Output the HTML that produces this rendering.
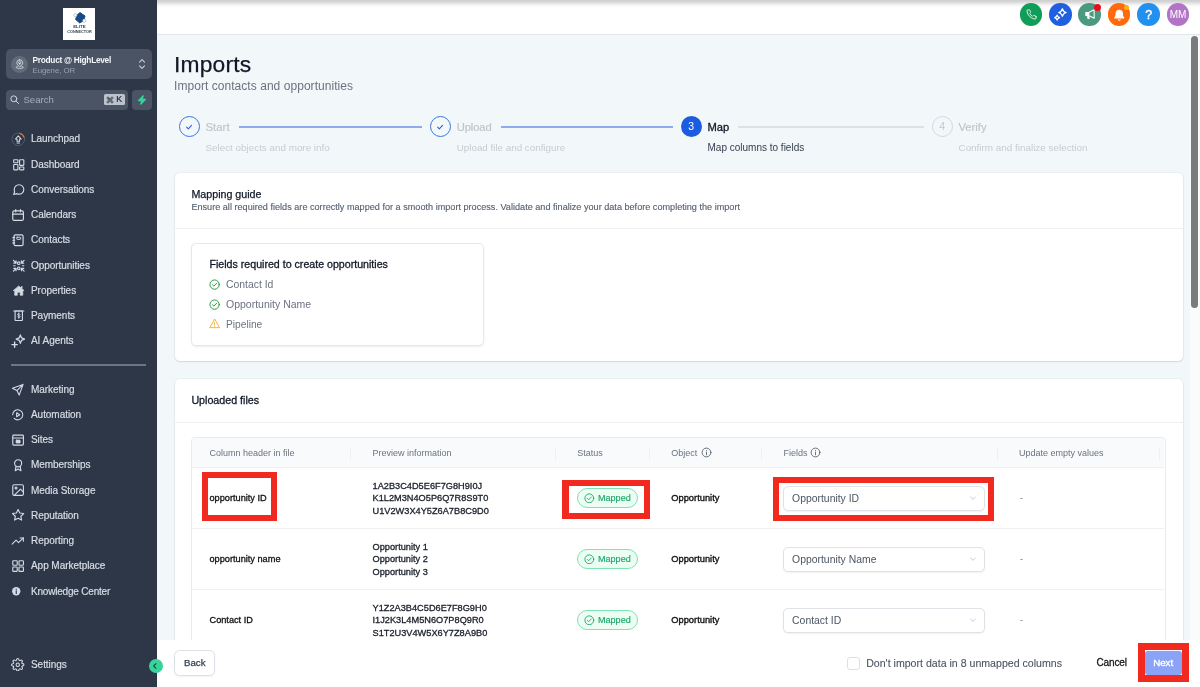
<!DOCTYPE html>
<html>
<head>
<meta charset="utf-8">
<title>Imports</title>
<style>
*{box-sizing:border-box;margin:0;padding:0}
html,body{width:1200px;height:687px;overflow:hidden;background:#f2f7fa;font-family:"Liberation Sans",sans-serif;}
.abs{position:absolute}
.t{position:absolute;white-space:nowrap}
#side{position:absolute;left:0;top:0;width:157px;height:687px;background:#2d3748;}
#top{position:absolute;left:157px;top:0;width:1043px;height:35px;background:#fff;border-bottom:1px solid #e4e7ea;}
#topshade{position:absolute;left:157px;top:0;width:1043px;height:8px;background:linear-gradient(#cecece,#d6d6d6 22%,#ededed 50%,#fbfbfb 80%,#fff);}
.card{position:absolute;background:#fff;border-radius:5px;box-shadow:0 1px 2px rgba(16,24,40,.10),0 0 0 1px rgba(16,24,40,.035)}
</style>
</head>
<body>
<div id="wrap" style="position:absolute;left:0;top:0;width:1200px;height:687px;will-change:transform;">
<div id="side">
<div class="abs" style="left:63.20px;top:7.80px;width:32.20px;height:32.00px;background:#fff;"></div>
<svg class="abs" style="left:63px;top:8px" width="33" height="32" viewBox="0 0 33 32">
<path d="M17 4.600 L22 8 L20.600 12.800 L16.600 14.900 L12.600 11.400 L14 7 Z" fill="#154a86" stroke="#154a86" stroke-width="1" stroke-linejoin="round"/>
<circle cx="12.400" cy="7.100" r="1.600" fill="#fff" stroke="#a9b1bd" stroke-width=".7"/>
<circle cx="21.300" cy="12.700" r="1.600" fill="#fff" stroke="#a9b1bd" stroke-width=".7"/>
<g font-family="Liberation Sans, sans-serif" font-weight="700" fill="#364257"><text x="16.400" y="20.300" font-size="3.800" text-anchor="middle" textLength="12.400" lengthAdjust="spacingAndGlyphs">ELITE</text><text x="16.500" y="24.800" font-size="3.800" text-anchor="middle" textLength="24.400" lengthAdjust="spacingAndGlyphs">CONNECTOR</text></g>
</svg>
<div class="abs" style="left:6.00px;top:49.00px;width:146.00px;height:30.00px;background:#4a5465;border-radius:5px;"></div>
<div class="abs" style="left:11.00px;top:55.50px;width:17.00px;height:17.00px;background:#626b7a;border-radius:50%;"></div>
<svg class="abs" style="left:14.75px;top:59.25px;" width="9.5" height="9.5" viewBox="0 0 24 24" fill="none" stroke="#eef1f4" stroke-width="1.8" stroke-linecap="round" stroke-linejoin="round"><path d="M12 12.5a3 3 0 1 0 0-6 3 3 0 0 0 0 6z"/><path d="M12 2a7.5 7.5 0 0 0-7.5 7.5c0 4 3.2 6.6 7.5 10.5 4.300-3.900 7.500-6.500 7.500-10.500A7.500 7.500 0 0 0 12 2z"/><path d="M7 18.500c-2.400.600-4 1.500-4 2.600C3 22.700 7 23.800 12 23.800s9-1.100 9-2.700c0-1.100-1.600-2-4-2.600"/></svg>
<div class="t" style="left:32.60px;top:55.77px;font-size:8.3px;line-height:8.3px;color:#f4f6f9;font-weight:700;letter-spacing:-0.28px;">Product @ HighLevel</div>
<div class="t" style="left:32.60px;top:66.61px;font-size:7.9px;line-height:7.9px;color:#97a0ae;letter-spacing:-0.1px;">Eugene, OR</div>
<svg class="abs" style="left:135.60px;top:57.90px;" width="12" height="12" viewBox="0 0 24 24" fill="none" stroke="#cbd0d8" stroke-width="2.1" stroke-linecap="round" stroke-linejoin="round"><path d="M7 8.200l5-5 5 5"/><path d="M7 15.800l5 5 5-5"/></svg>
<div class="abs" style="left:5.50px;top:90.00px;width:122.50px;height:20.00px;background:#4a5465;border-radius:4px;"></div>
<svg class="abs" style="left:8.90px;top:94.40px;" width="11" height="11" viewBox="0 0 24 24" fill="none" stroke="#d2d7de" stroke-width="2.1" stroke-linecap="round" stroke-linejoin="round"><circle cx="10.500" cy="10.500" r="6.500"/><path d="M21 21l-5.600-5.600"/></svg>
<div class="t" style="left:23.40px;top:94.77px;font-size:9.6px;line-height:9.6px;color:#a5adba;">Search</div>
<div class="abs" style="left:103.80px;top:94.00px;width:20.90px;height:11.20px;background:#bcc2cb;border-radius:1.5px;"></div>
<svg class="abs" style="left:106px;top:95.6px" width="8" height="8" viewBox="0 0 24 24" fill="none" stroke="#1f2937" stroke-width="2" stroke-linecap="round" stroke-linejoin="round"><path d="M9 9V6a3 3 0 1 0-3 3h12a3 3 0 1 0-3-3v12a3 3 0 1 0 3-3H6a3 3 0 1 0 3 3V9z"/></svg>
<div class="t" style="left:116.20px;top:95.35px;font-size:8.8px;line-height:8.8px;color:#1f2937;-webkit-text-stroke:0.2px #1f2937;">K</div>
<div class="abs" style="left:132.00px;top:90.00px;width:20.00px;height:20.00px;background:#4a5465;border-radius:4px;"></div>
<svg class="abs" style="left:137px;top:95px" width="10" height="10" viewBox="0 0 20 20"><path d="M12.500 1.500 L3 11.500 H9.300 L7.500 18.500 L17 8.500 H10.700 Z" fill="#37d39a" stroke="#37d39a" stroke-width="2.200" stroke-linejoin="round"/></svg>
<svg class="abs" style="left:11.10px;top:131.70px;" width="14.6" height="14.6" viewBox="0 0 24 24" fill="none" stroke="#d5dbe4" stroke-width="2" stroke-linecap="round" stroke-linejoin="round"><circle cx="12" cy="12" r="10.400" stroke="#566275" stroke-width="1.400"/><path d="M14.500 2.200a10 10 0 0 1 7 6.300" stroke="#e0793a" stroke-width="2"/><path d="M12 6.500l-4.800 5h2.700v3.600h4.200v-3.600h2.700z" stroke-width="1.700"/><path d="M9.900 18h4.200" stroke-width="1.700"/></svg>
<div class="t" style="left:31.00px;top:134.44px;font-size:10px;line-height:10px;color:#d8dde5;-webkit-text-stroke:0.2px #d8dde5;letter-spacing:-0.05px;">Launchpad</div>
<svg class="abs" style="left:11.65px;top:157.50px;" width="13.5" height="13.5" viewBox="0 0 24 24" fill="none" stroke="#d5dbe4" stroke-width="2" stroke-linecap="round" stroke-linejoin="round"><rect x="3" y="3" width="7.500" height="5.500" rx="1"/><rect x="13.500" y="3" width="7.500" height="10" rx="1"/><rect x="3" y="11.500" width="7.500" height="9.500" rx="1"/><rect x="13.500" y="16" width="7.500" height="5" rx="1"/></svg>
<div class="t" style="left:31.00px;top:159.69px;font-size:10px;line-height:10px;color:#d8dde5;-webkit-text-stroke:0.2px #d8dde5;letter-spacing:-0.05px;">Dashboard</div>
<svg class="abs" style="left:11.65px;top:182.75px;" width="13.5" height="13.5" viewBox="0 0 24 24" fill="none" stroke="#d5dbe4" stroke-width="2" stroke-linecap="round" stroke-linejoin="round"><path d="M21 11.500a8.400 8.400 0 0 1-8.500 8.300 8.700 8.700 0 0 1-3.800-.900L3 20.500l1.700-4.900A8.200 8.200 0 0 1 4 11.500a8.400 8.400 0 0 1 8.500-8.300A8.400 8.400 0 0 1 21 11.500z"/></svg>
<div class="t" style="left:31.00px;top:184.94px;font-size:10px;line-height:10px;color:#d8dde5;-webkit-text-stroke:0.2px #d8dde5;letter-spacing:-0.05px;">Conversations</div>
<svg class="abs" style="left:11.30px;top:207.65px;" width="14.2" height="14.2" viewBox="0 0 24 24" fill="none" stroke="#d5dbe4" stroke-width="2" stroke-linecap="round" stroke-linejoin="round"><rect x="3" y="5" width="18" height="16" rx="2.500"/><path d="M3 10.500h18M8 2.500v4M16 2.500v4"/></svg>
<div class="t" style="left:31.00px;top:210.19px;font-size:10px;line-height:10px;color:#d8dde5;-webkit-text-stroke:0.2px #d8dde5;letter-spacing:-0.05px;">Calendars</div>
<svg class="abs" style="left:11.15px;top:232.75px;" width="14.5" height="14.5" viewBox="0 0 24 24" fill="none" stroke="#d5dbe4" stroke-width="2" stroke-linecap="round" stroke-linejoin="round"><rect x="5" y="3" width="15" height="18" rx="2.500"/><path d="M3 7.500h3M3 12h3M3 16.500h3"/><rect x="9.500" y="7" width="6.500" height="3.500" rx=".8" stroke-width="1.600"/></svg>
<div class="t" style="left:31.00px;top:235.44px;font-size:10px;line-height:10px;color:#d8dde5;-webkit-text-stroke:0.2px #d8dde5;letter-spacing:-0.05px;">Contacts</div>
<svg class="abs" style="left:11.65px;top:258.50px;" width="13.5" height="13.5" viewBox="0 0 24 24" fill="none" stroke="#d5dbe4" stroke-width="2" stroke-linecap="round" stroke-linejoin="round"><circle cx="12" cy="7.500" r="2.300"/><circle cx="12" cy="16.500" r="2.300"/><path d="M2.500 2.500l4.500 4.500M7.200 3.200v4H3.200M21.500 2.500l-4.500 4.500M16.800 3.200v4h4M2.500 21.500l4.500-4.500M7.200 20.800v-4H3.200M21.500 21.500l-4.500-4.500M16.800 20.800v-4h4" stroke-width="2.100"/><path d="M3 12h2.500M18.500 12H21" stroke-width="2.100"/></svg>
<div class="t" style="left:31.00px;top:260.69px;font-size:10px;line-height:10px;color:#d8dde5;-webkit-text-stroke:0.2px #d8dde5;letter-spacing:-0.05px;">Opportunities</div>
<svg class="abs" style="left:11.65px;top:283.75px;" width="13.5" height="13.5" viewBox="0 0 24 24" fill="none" stroke="#d5dbe4" stroke-width="2" stroke-linecap="round" stroke-linejoin="round"><path d="M2.500 11.500L12 3.500l9.500 8h-2.300V20h-4.600v-5.500H9.400V20H4.800v-8.500z" fill="#d5dbe4" stroke-width="1.200"/><rect x="16" y="4" width="2.600" height="4" fill="#d5dbe4" stroke="none"/></svg>
<div class="t" style="left:31.00px;top:285.94px;font-size:10px;line-height:10px;color:#d8dde5;-webkit-text-stroke:0.2px #d8dde5;letter-spacing:-0.05px;">Properties</div>
<svg class="abs" style="left:11.65px;top:309.00px;" width="13.5" height="13.5" viewBox="0 0 24 24" fill="none" stroke="#d5dbe4" stroke-width="2" stroke-linecap="round" stroke-linejoin="round"><rect x="5.500" y="3.500" width="13" height="17" rx="1"/><path d="M3 3.500h18"/><path d="M14.200 9.500c-.5-.8-1.300-1.100-2.200-1.100-1.200 0-2 .7-2 1.600 0 2.300 4.400 1.100 4.400 3.400 0 1-.9 1.700-2.200 1.700-1 0-1.900-.4-2.400-1.200M12 7v9.600" stroke-width="1.600"/></svg>
<div class="t" style="left:31.00px;top:311.19px;font-size:10px;line-height:10px;color:#d8dde5;-webkit-text-stroke:0.2px #d8dde5;letter-spacing:-0.05px;">Payments</div>
<svg class="abs" style="left:11.15px;top:333.75px;" width="14.5" height="14.5" viewBox="0 0 24 24" fill="none" stroke="#d5dbe4" stroke-width="2" stroke-linecap="round" stroke-linejoin="round"><path d="M15.500 1.500l2 5 5 2-5 2-2 5-2-5-5-2 5-2z"/><path d="M6 13v9M1.500 17.500h9" stroke-width="2.300"/></svg>
<div class="t" style="left:31.00px;top:336.44px;font-size:10px;line-height:10px;color:#d8dde5;-webkit-text-stroke:0.2px #d8dde5;letter-spacing:-0.05px;">AI Agents</div>
<div class="abs" style="left:10.80px;top:364.00px;width:134.90px;height:1.50px;background:#6b7687;"></div>
<svg class="abs" style="left:11.25px;top:382.55px;" width="13.5" height="13.5" viewBox="0 0 24 24" fill="none" stroke="#d5dbe4" stroke-width="1.9" stroke-linecap="round" stroke-linejoin="round"><path d="M21.500 2.500L10.500 13.500M21.500 2.500l-7 19-4-8-8-4z"/></svg>
<div class="t" style="left:31.00px;top:384.64px;font-size:10px;line-height:10px;color:#d8dde5;-webkit-text-stroke:0.2px #d8dde5;letter-spacing:-0.05px;">Marketing</div>
<svg class="abs" style="left:11.25px;top:407.80px;" width="13.5" height="13.5" viewBox="0 0 24 24" fill="none" stroke="#d5dbe4" stroke-width="1.9" stroke-linecap="round" stroke-linejoin="round"><path d="M5.600 18.400A9 9 0 1 0 3 12"/><path d="M10 8.500l5.500 3.500-5.500 3.500z"/></svg>
<div class="t" style="left:31.00px;top:409.89px;font-size:10px;line-height:10px;color:#d8dde5;-webkit-text-stroke:0.2px #d8dde5;letter-spacing:-0.05px;">Automation</div>
<svg class="abs" style="left:10.90px;top:432.70px;" width="14.2" height="14.2" viewBox="0 0 24 24" fill="none" stroke="#d5dbe4" stroke-width="1.9" stroke-linecap="round" stroke-linejoin="round"><rect x="3" y="3.500" width="18" height="17" rx="1.500"/><path d="M3 8.500h18"/><rect x="8.500" y="12" width="7" height="5" rx="1" fill="#d5dbe4" stroke-width="1.200"/></svg>
<div class="t" style="left:31.00px;top:435.14px;font-size:10px;line-height:10px;color:#d8dde5;-webkit-text-stroke:0.2px #d8dde5;letter-spacing:-0.05px;">Sites</div>
<svg class="abs" style="left:10.90px;top:457.95px;" width="14.2" height="14.2" viewBox="0 0 24 24" fill="none" stroke="#d5dbe4" stroke-width="1.9" stroke-linecap="round" stroke-linejoin="round"><circle cx="12" cy="9" r="6"/><path d="M8.500 14l-1.300 7.500 4.800-2.800 4.800 2.800-1.300-7.500"/></svg>
<div class="t" style="left:31.00px;top:460.39px;font-size:10px;line-height:10px;color:#d8dde5;-webkit-text-stroke:0.2px #d8dde5;letter-spacing:-0.05px;">Memberships</div>
<svg class="abs" style="left:10.90px;top:483.20px;" width="14.2" height="14.2" viewBox="0 0 24 24" fill="none" stroke="#d5dbe4" stroke-width="1.9" stroke-linecap="round" stroke-linejoin="round"><rect x="3" y="3" width="18" height="18" rx="2.500"/><circle cx="8.500" cy="8.500" r="1.700"/><path d="M21 15.500l-5-5L5.500 21"/></svg>
<div class="t" style="left:31.00px;top:485.64px;font-size:10px;line-height:10px;color:#d8dde5;-webkit-text-stroke:0.2px #d8dde5;letter-spacing:-0.05px;">Media Storage</div>
<svg class="abs" style="left:10.90px;top:508.45px;" width="14.2" height="14.2" viewBox="0 0 24 24" fill="none" stroke="#d5dbe4" stroke-width="1.9" stroke-linecap="round" stroke-linejoin="round"><path d="M12 2.500l2.900 6 6.600.900-4.800 4.600 1.200 6.500-5.900-3.100-5.900 3.100 1.200-6.500L2.500 9.400l6.600-.900z"/></svg>
<div class="t" style="left:31.00px;top:510.88px;font-size:10px;line-height:10px;color:#d8dde5;-webkit-text-stroke:0.2px #d8dde5;letter-spacing:-0.05px;">Reputation</div>
<svg class="abs" style="left:11.25px;top:534.05px;" width="13.5" height="13.5" viewBox="0 0 24 24" fill="none" stroke="#d5dbe4" stroke-width="1.9" stroke-linecap="round" stroke-linejoin="round"><path d="M22 7l-8.500 8.500-4.500-4.500L2 18"/><path d="M16 7h6v6"/></svg>
<div class="t" style="left:31.00px;top:536.13px;font-size:10px;line-height:10px;color:#d8dde5;-webkit-text-stroke:0.2px #d8dde5;letter-spacing:-0.05px;">Reporting</div>
<svg class="abs" style="left:10.90px;top:558.95px;" width="14.2" height="14.2" viewBox="0 0 24 24" fill="none" stroke="#d5dbe4" stroke-width="1.9" stroke-linecap="round" stroke-linejoin="round"><rect x="3" y="3" width="7.500" height="7.500" rx="1.200"/><rect x="13.500" y="3" width="7.500" height="7.500" rx="1.200"/><rect x="3" y="13.500" width="7.500" height="7.500" rx="1.200"/><rect x="13.500" y="13.500" width="7.500" height="7.500" rx="1.200"/></svg>
<div class="t" style="left:31.00px;top:561.38px;font-size:10px;line-height:10px;color:#d8dde5;-webkit-text-stroke:0.2px #d8dde5;letter-spacing:-0.05px;">App Marketplace</div>
<svg class="abs" style="left:10.95px;top:586.05px;" width="10.5" height="10.5" viewBox="0 0 24 24" fill="none" stroke="#d5dbe4" stroke-width="1.9" stroke-linecap="round" stroke-linejoin="round"><circle cx="12" cy="12" r="9.500" fill="#d5dbe4" stroke="none"/><path d="M12 11v6" stroke="#2d3748" stroke-width="2.600"/><circle cx="12" cy="7.300" r="1.500" fill="#2d3748" stroke="none"/></svg>
<div class="t" style="left:31.00px;top:586.63px;font-size:10px;line-height:10px;color:#d8dde5;-webkit-text-stroke:0.2px #d8dde5;letter-spacing:-0.2px;">Knowledge Center</div>
<svg class="abs" style="left:11.05px;top:657.75px;" width="13.5" height="13.5" viewBox="0 0 24 24" fill="none" stroke="#d5dbe4" stroke-width="1.9" stroke-linecap="round" stroke-linejoin="round"><circle cx="12" cy="12" r="3"/><path d="M19.400 15a1.650 1.650 0 0 0 .33 1.820l.06.06a2 2 0 1 1-2.830 2.830l-.06-.06a1.650 1.650 0 0 0-1.820-.33 1.650 1.650 0 0 0-1 1.510V21a2 2 0 0 1-4 0v-.09A1.650 1.650 0 0 0 9 19.400a1.650 1.650 0 0 0-1.820.33l-.06.06a2 2 0 1 1-2.830-2.830l.06-.06a1.650 1.650 0 0 0 .33-1.820 1.650 1.650 0 0 0-1.510-1H3a2 2 0 0 1 0-4h.09A1.650 1.650 0 0 0 4.600 9a1.650 1.650 0 0 0-.33-1.820l-.06-.06a2 2 0 1 1 2.830-2.830l.06.06a1.650 1.650 0 0 0 1.820.33H9a1.650 1.650 0 0 0 1-1.510V3a2 2 0 0 1 4 0v.09a1.650 1.650 0 0 0 1 1.510 1.650 1.650 0 0 0 1.820-.33l.06-.06a2 2 0 1 1 2.830 2.830l-.06.06a1.650 1.650 0 0 0-.33 1.820V9a1.650 1.650 0 0 0 1.510 1H21a2 2 0 0 1 0 4h-.09a1.650 1.650 0 0 0-1.510 1z"/></svg>
<div class="t" style="left:31.00px;top:660.13px;font-size:10px;line-height:10px;color:#d8dde5;-webkit-text-stroke:0.2px #d8dde5;letter-spacing:-0.05px;">Settings</div>
</div>
<div id="top"></div><div id="topshade"></div>
<div class="abs" style="left:1019.75px;top:3.45px;width:22.5px;height:22.5px;border-radius:50%;background:#0f9d58"></div>
<svg class="abs" style="left:1025.50px;top:9.20px;" width="11" height="11" viewBox="0 0 24 24" fill="none" stroke="#e9fff3" stroke-width="1.9" stroke-linecap="round" stroke-linejoin="round"><path d="M22 16.920v3a2 2 0 0 1-2.180 2 19.790 19.790 0 0 1-8.630-3.070 19.500 19.500 0 0 1-6-6 19.790 19.790 0 0 1-3.070-8.670A2 2 0 0 1 4.110 2h3a2 2 0 0 1 2 1.720 12.840 12.840 0 0 0 .7 2.810 2 2 0 0 1-.45 2.110L8.090 9.910a16 16 0 0 0 6 6l1.270-1.270a2 2 0 0 1 2.110-.45 12.840 12.840 0 0 0 2.810.7A2 2 0 0 1 22 16.920z"/></svg>
<div class="abs" style="left:1049.05px;top:3.45px;width:22.5px;height:22.5px;border-radius:50%;background:#1f5fe0"></div>
<svg class="abs" style="left:1053.10px;top:7.20px;" width="15" height="15" viewBox="0 0 24 24" fill="none" stroke="#fff" stroke-width="2" stroke-linecap="round" stroke-linejoin="round"><path d="M15.00 2.80Q16.20 7.60 21.00 8.80Q16.20 10.00 15.00 14.80Q13.80 10.00 9.00 8.80Q13.80 7.60 15.00 2.80z"/><path d="M6.60 13.00Q7.40 16.20 10.60 17.00Q7.40 17.80 6.60 21.00Q5.80 17.80 2.60 17.00Q5.80 16.20 6.60 13.00z"/></svg>
<div class="abs" style="left:1078.45px;top:3.45px;width:22.5px;height:22.5px;border-radius:50%;background:#4a9a82"></div>
<svg class="abs" style="left:1083.95px;top:8.35px;" width="12.5" height="12.5" viewBox="0 0 24 24" fill="none" stroke="#fff" stroke-width="2" stroke-linecap="round" stroke-linejoin="round"><path d="M9 8.500L19.500 3.500v16L9 14.500z"/><path d="M3.500 8.500H9v6H3.500z" fill="#fff"/><path d="M6 14.500l1.200 6h3.300l-1.200-6z" fill="#fff" stroke-width="1.200"/></svg>
<div class="abs" style="left:1094.00px;top:3.50px;width:7.00px;height:7.00px;background:#ee0c1a;border-radius:50%;"></div>
<div class="abs" style="left:1107.95px;top:3.45px;width:22.5px;height:22.5px;border-radius:50%;background:#ff6a0c"></div>
<svg class="abs" style="left:1112.95px;top:8.55px;" width="12.5" height="12.5" viewBox="0 0 24 24" fill="none" stroke="#fff" stroke-width="2" stroke-linecap="round" stroke-linejoin="round"><path d="M18 8.500A6 6 0 0 0 6 8.500c0 7-3 8.500-3 8.500h18s-3-1.500-3-8.500z" fill="#fff"/><path d="M10.300 20.500a2 2 0 0 0 3.400 0" /></svg>
<div class="abs" style="left:1123.80px;top:5.00px;width:5.00px;height:5.00px;background:#f5b316;border-radius:50%;"></div>
<div class="abs" style="left:1137.45px;top:3.45px;width:22.5px;height:22.5px;border-radius:50%;background:#2190ee"></div>
<div class="t" style="left:1145.30px;top:8.79px;font-size:12.3px;line-height:12.3px;color:#fff;-webkit-text-stroke:0.45px #fff;">?</div>
<div class="abs" style="left:1166.75px;top:3.45px;width:22.5px;height:22.5px;border-radius:50%;background:#b274c6"></div>
<div class="t" style="left:1169.70px;top:10.04px;font-size:10px;line-height:10px;color:#fff;letter-spacing:-0.1px;">MM</div>
<div class="abs" style="left:1190.00px;top:36.00px;width:10.00px;height:604.00px;background:#fafbfb;"></div>
<div class="abs" style="left:1190.90px;top:36.00px;width:7.40px;height:272.00px;background:#7b7b7d;border-radius:4px;"></div>
<div class="t" style="left:174.00px;top:53.10px;font-size:22.8px;line-height:22.8px;color:#111827;-webkit-text-stroke:0.25px #111827;letter-spacing:0.2px;">Imports</div>
<div class="t" style="left:174.00px;top:80.14px;font-size:12px;line-height:12px;color:#6b7280;letter-spacing:0.05px;">Import contacts and opportunities</div>
<div class="abs" style="left:178.75px;top:115.75px;width:21.00px;height:21.00px;border:1.2px solid #3b73e0;border-radius:50%;"></div>
<svg class="abs" style="left:185.25px;top:122.55px;" width="8" height="8" viewBox="0 0 24 24" fill="none" stroke="#2f62d8" stroke-width="3.2" stroke-linecap="round" stroke-linejoin="round"><path d="M5 12.500l5 5L19.500 7"/></svg>
<div class="abs" style="left:429.75px;top:115.75px;width:21.00px;height:21.00px;border:1.2px solid #3b73e0;border-radius:50%;"></div>
<svg class="abs" style="left:436.25px;top:122.55px;" width="8" height="8" viewBox="0 0 24 24" fill="none" stroke="#2f62d8" stroke-width="3.2" stroke-linecap="round" stroke-linejoin="round"><path d="M5 12.500l5 5L19.500 7"/></svg>
<div class="abs" style="left:680.50px;top:115.75px;width:21.00px;height:21.00px;background:#1c5ce0;border-radius:50%;"></div>
<div class="t" style="left:688.20px;top:121.21px;font-size:10.5px;line-height:10.5px;color:#fff;">3</div>
<div class="abs" style="left:931.75px;top:115.75px;width:21.00px;height:21.00px;border:1px solid #d3d7dc;border-radius:50%;"></div>
<div class="t" style="left:939.20px;top:121.21px;font-size:10.5px;line-height:10.5px;color:#c3c7cd;">4</div>
<div class="abs" style="left:239.00px;top:126.05px;width:182.60px;height:1.80px;background:#8cacec;"></div>
<div class="abs" style="left:500.50px;top:126.05px;width:172.00px;height:1.80px;background:#8cacec;"></div>
<div class="abs" style="left:738.00px;top:126.05px;width:185.75px;height:1.80px;background:#dde0e5;"></div>
<div class="t" style="left:205.50px;top:121.55px;font-size:11.4px;line-height:11.4px;color:#c1c5cb;-webkit-text-stroke:0.2px #c1c5cb;">Start</div>
<div class="t" style="left:456.75px;top:121.72px;font-size:11.2px;line-height:11.2px;color:#c1c5cb;-webkit-text-stroke:0.2px #c1c5cb;letter-spacing:-0.1px;">Upload</div>
<div class="t" style="left:707.50px;top:121.52px;font-size:11.2px;line-height:11.2px;color:#111827;-webkit-text-stroke:0.3px #111827;">Map</div>
<div class="t" style="left:958.50px;top:121.72px;font-size:11.2px;line-height:11.2px;color:#c1c5cb;-webkit-text-stroke:0.2px #c1c5cb;">Verify</div>
<div class="t" style="left:205.50px;top:142.66px;font-size:9.85px;line-height:9.85px;color:#c8ccd2;">Select objects and more info</div>
<div class="t" style="left:456.75px;top:142.70px;font-size:9.8px;line-height:9.8px;color:#c8ccd2;">Upload file and configure</div>
<div class="t" style="left:707.50px;top:142.53px;font-size:10px;line-height:10px;color:#374151;">Map columns to fields</div>
<div class="t" style="left:958.50px;top:142.62px;font-size:9.9px;line-height:9.9px;color:#c8ccd2;">Confirm and finalize selection</div>
<div class="card" style="left:174.5px;top:173px;width:1008.6px;height:188px"></div>
<div class="abs" style="left:174.50px;top:227.50px;width:1009.00px;height:1.00px;background:#eef0f3;"></div>
<div class="t" style="left:191.40px;top:188.84px;font-size:10.7px;line-height:10.7px;color:#111827;-webkit-text-stroke:0.25px #111827;">Mapping guide</div>
<div class="t" style="left:191.40px;top:203.00px;font-size:9.1px;line-height:9.1px;color:#556070;-webkit-text-stroke:0.12px #556070;letter-spacing:0.01px;">Ensure all required fields are correctly mapped for a smooth import process. Validate and finalize your data before completing the import</div>
<div class="abs" style="left:191.40px;top:243.00px;width:292.30px;height:103.00px;background:#fff;border:1px solid #e6e8ec;border-radius:5px;box-shadow:0 1px 2px rgba(16,24,40,.08);"></div>
<div class="t" style="left:209.50px;top:259.30px;font-size:10.63px;line-height:10.63px;color:#111827;-webkit-text-stroke:0.3px #111827;">Fields required to create opportunities</div>
<svg class="abs" style="left:208.90px;top:279.20px;" width="11.2" height="11.2" viewBox="0 0 24 24" fill="none" stroke="#2a9a3f" stroke-width="2.1" stroke-linecap="round" stroke-linejoin="round"><circle cx="12" cy="12" r="10"/><path d="M7.500 12.300l3 3 6-6.300"/></svg>
<div class="t" style="left:226.00px;top:280.00px;font-size:10.4px;line-height:10.4px;color:#6b7280;">Contact Id</div>
<svg class="abs" style="left:208.90px;top:298.80px;" width="11.2" height="11.2" viewBox="0 0 24 24" fill="none" stroke="#2a9a3f" stroke-width="2.1" stroke-linecap="round" stroke-linejoin="round"><circle cx="12" cy="12" r="10"/><path d="M7.500 12.300l3 3 6-6.300"/></svg>
<div class="t" style="left:226.00px;top:298.71px;font-size:10.5px;line-height:10.5px;color:#6b7280;">Opportunity Name</div>
<svg class="abs" style="left:208.90px;top:317.80px;" width="11" height="11" viewBox="0 0 24 24" fill="none" stroke="#f0a92c" stroke-width="1.9" stroke-linecap="round" stroke-linejoin="round"><path d="M12 3L1.800 21h20.400z"/><path d="M12 10v5M12 18v.3"/></svg>
<div class="t" style="left:226.00px;top:319.57px;font-size:10.2px;line-height:10.2px;color:#6b7280;">Pipeline</div>
<div class="card" style="left:174.5px;top:378.5px;width:1008.6px;height:300px"></div>
<div class="abs" style="left:174.50px;top:421.70px;width:1009.00px;height:1.00px;background:#eef0f3;"></div>
<div class="t" style="left:191.40px;top:395.34px;font-size:10.7px;line-height:10.7px;color:#111827;-webkit-text-stroke:0.3px #111827;">Uploaded files</div>
<div class="abs" style="left:191.40px;top:436.80px;width:974.40px;height:223.20px;background:#fff;border:1px solid #e9ebef;border-radius:4px;"></div>
<div class="abs" style="left:192.40px;top:437.80px;width:971.70px;height:29.50px;background:#f9fafb;border-radius:3px 3px 0 0;"></div>
<div class="abs" style="left:192.40px;top:467.00px;width:971.70px;height:1.00px;background:#eef0f3;"></div>
<div class="abs" style="left:350.20px;top:448.00px;width:1.00px;height:12.00px;background:#eef0f3;"></div>
<div class="abs" style="left:554.60px;top:448.00px;width:1.00px;height:12.00px;background:#eef0f3;"></div>
<div class="abs" style="left:648.70px;top:448.00px;width:1.00px;height:12.00px;background:#eef0f3;"></div>
<div class="abs" style="left:761.30px;top:448.00px;width:1.00px;height:12.00px;background:#eef0f3;"></div>
<div class="abs" style="left:996.90px;top:448.00px;width:1.00px;height:12.00px;background:#eef0f3;"></div>
<div class="abs" style="left:1159.40px;top:448.00px;width:1.00px;height:12.00px;background:#eef0f3;"></div>
<div class="t" style="left:209.50px;top:448.58px;font-size:9px;line-height:9px;color:#6b7280;">Column header in file</div>
<div class="t" style="left:372.50px;top:448.58px;font-size:9px;line-height:9px;color:#6b7280;">Preview information</div>
<div class="t" style="left:577.30px;top:448.58px;font-size:9px;line-height:9px;color:#6b7280;">Status</div>
<div class="t" style="left:671.30px;top:448.58px;font-size:9px;line-height:9px;color:#6b7280;">Object</div>
<div class="t" style="left:783.40px;top:448.58px;font-size:9px;line-height:9px;color:#6b7280;">Fields</div>
<div class="t" style="left:1019.00px;top:448.58px;font-size:9px;line-height:9px;color:#6b7280;">Update empty values</div>
<svg class="abs" style="left:700.50px;top:447.10px;" width="11" height="11" viewBox="0 0 24 24" fill="none" stroke="#4b5563" stroke-width="1.8" stroke-linecap="round" stroke-linejoin="round"><circle cx="12" cy="12" r="9.600"/><path d="M12 11v6M12 7.300v.3"/></svg>
<svg class="abs" style="left:810.30px;top:447.10px;" width="11" height="11" viewBox="0 0 24 24" fill="none" stroke="#4b5563" stroke-width="1.8" stroke-linecap="round" stroke-linejoin="round"><circle cx="12" cy="12" r="9.600"/><path d="M12 11v6M12 7.300v.3"/></svg>
<div class="abs" style="left:201.60px;top:472.00px;width:75.60px;height:48.90px;background:#f2291e;"></div>
<div class="abs" style="left:208.00px;top:478.20px;width:63.30px;height:36.80px;background:#fff;"></div>
<div class="abs" style="left:562.40px;top:479.90px;width:87.60px;height:39.40px;background:#f2291e;"></div>
<div class="abs" style="left:569.10px;top:486.10px;width:74.70px;height:27.20px;background:#fff;"></div>
<div class="abs" style="left:772.90px;top:476.90px;width:221.40px;height:44.30px;background:#f2291e;"></div>
<div class="abs" style="left:779.20px;top:483.20px;width:208.80px;height:31.80px;background:#fff;"></div>
<div class="t" style="left:209.50px;top:494.01px;font-size:9.2px;line-height:9.2px;color:#111111;-webkit-text-stroke:0.3px #111111;">opportunity ID</div>
<div class="t" style="left:372.50px;top:481.51px;font-size:9.2px;line-height:9.2px;color:#1a1f2b;-webkit-text-stroke:0.3px #1a1f2b;letter-spacing:0.02px;">1A2B3C4D5E6F7G8H9I0J</div>
<div class="t" style="left:372.50px;top:494.16px;font-size:9.2px;line-height:9.2px;color:#1a1f2b;-webkit-text-stroke:0.3px #1a1f2b;letter-spacing:0.02px;">K1L2M3N4O5P6Q7R8S9T0</div>
<div class="t" style="left:372.50px;top:506.81px;font-size:9.2px;line-height:9.2px;color:#1a1f2b;-webkit-text-stroke:0.3px #1a1f2b;letter-spacing:0.02px;">U1V2W3X4Y5Z6A7B8C9D0</div>
<div class="abs" style="left:577.30px;top:488.00px;width:60.90px;height:20.00px;background:#ecfdf4;border:1px solid #7fe3b3;border-radius:10px;"></div>
<svg class="abs" style="left:584.20px;top:492.90px;" width="10.6" height="10.6" viewBox="0 0 24 24" fill="none" stroke="#17a566" stroke-width="2" stroke-linecap="round" stroke-linejoin="round"><circle cx="12" cy="12" r="10"/><path d="M7.500 12.300l3 3 6-6.300"/></svg>
<div class="t" style="left:597.90px;top:494.00px;font-size:9.1px;line-height:9.1px;color:#1aa868;-webkit-text-stroke:0.15px #1aa868;">Mapped</div>
<div class="t" style="left:671.30px;top:493.93px;font-size:9.3px;line-height:9.3px;color:#111111;-webkit-text-stroke:0.35px #111111;">Opportunity</div>
<div class="abs" style="left:783.40px;top:486.10px;width:201.20px;height:24.60px;background:#fff;border:1px solid #dfe2e7;border-radius:5px;box-shadow:0 1px 2px rgba(16,24,40,.06);"></div>
<div class="t" style="left:792.10px;top:493.80px;font-size:10.4px;line-height:10.4px;color:#4b5563;">Opportunity ID</div>
<svg class="abs" style="left:968.70px;top:494.30px;" width="8" height="8" viewBox="0 0 24 24" fill="none" stroke="#a6adb8" stroke-width="2" stroke-linecap="round" stroke-linejoin="round"><path d="M5 9l7 7 7-7"/></svg>
<div class="t" style="left:1020.00px;top:493.68px;font-size:9px;line-height:9px;color:#6b7280;">-</div>
<div class="abs" style="left:192.40px;top:528.30px;width:971.70px;height:1.00px;background:#eef0f3;"></div>
<div class="t" style="left:209.50px;top:555.01px;font-size:9.2px;line-height:9.2px;color:#111111;-webkit-text-stroke:0.3px #111111;">opportunity name</div>
<div class="t" style="left:372.50px;top:542.51px;font-size:9.2px;line-height:9.2px;color:#1a1f2b;-webkit-text-stroke:0.3px #1a1f2b;letter-spacing:0.02px;">Opportunity 1</div>
<div class="t" style="left:372.50px;top:555.16px;font-size:9.2px;line-height:9.2px;color:#1a1f2b;-webkit-text-stroke:0.3px #1a1f2b;letter-spacing:0.02px;">Opportunity 2</div>
<div class="t" style="left:372.50px;top:567.81px;font-size:9.2px;line-height:9.2px;color:#1a1f2b;-webkit-text-stroke:0.3px #1a1f2b;letter-spacing:0.02px;">Opportunity 3</div>
<div class="abs" style="left:577.30px;top:549.00px;width:60.90px;height:20.00px;background:#ecfdf4;border:1px solid #7fe3b3;border-radius:10px;"></div>
<svg class="abs" style="left:584.20px;top:553.90px;" width="10.6" height="10.6" viewBox="0 0 24 24" fill="none" stroke="#17a566" stroke-width="2" stroke-linecap="round" stroke-linejoin="round"><circle cx="12" cy="12" r="10"/><path d="M7.500 12.300l3 3 6-6.300"/></svg>
<div class="t" style="left:597.90px;top:555.00px;font-size:9.1px;line-height:9.1px;color:#1aa868;-webkit-text-stroke:0.15px #1aa868;">Mapped</div>
<div class="t" style="left:671.30px;top:554.93px;font-size:9.3px;line-height:9.3px;color:#111111;-webkit-text-stroke:0.35px #111111;">Opportunity</div>
<div class="abs" style="left:783.40px;top:547.10px;width:201.20px;height:24.60px;background:#fff;border:1px solid #dfe2e7;border-radius:5px;box-shadow:0 1px 2px rgba(16,24,40,.06);"></div>
<div class="t" style="left:792.10px;top:554.80px;font-size:10.4px;line-height:10.4px;color:#4b5563;">Opportunity Name</div>
<svg class="abs" style="left:968.70px;top:555.30px;" width="8" height="8" viewBox="0 0 24 24" fill="none" stroke="#a6adb8" stroke-width="2" stroke-linecap="round" stroke-linejoin="round"><path d="M5 9l7 7 7-7"/></svg>
<div class="t" style="left:1020.00px;top:554.68px;font-size:9px;line-height:9px;color:#6b7280;">-</div>
<div class="abs" style="left:192.40px;top:589.30px;width:971.70px;height:1.00px;background:#eef0f3;"></div>
<div class="t" style="left:209.50px;top:616.01px;font-size:9.2px;line-height:9.2px;color:#111111;-webkit-text-stroke:0.3px #111111;">Contact ID</div>
<div class="t" style="left:372.50px;top:603.51px;font-size:9.2px;line-height:9.2px;color:#1a1f2b;-webkit-text-stroke:0.3px #1a1f2b;letter-spacing:0.02px;">Y1Z2A3B4C5D6E7F8G9H0</div>
<div class="t" style="left:372.50px;top:616.16px;font-size:9.2px;line-height:9.2px;color:#1a1f2b;-webkit-text-stroke:0.3px #1a1f2b;letter-spacing:0.02px;">I1J2K3L4M5N6O7P8Q9R0</div>
<div class="t" style="left:372.50px;top:628.81px;font-size:9.2px;line-height:9.2px;color:#1a1f2b;-webkit-text-stroke:0.3px #1a1f2b;letter-spacing:0.02px;">S1T2U3V4W5X6Y7Z8A9B0</div>
<div class="abs" style="left:577.30px;top:610.00px;width:60.90px;height:20.00px;background:#ecfdf4;border:1px solid #7fe3b3;border-radius:10px;"></div>
<svg class="abs" style="left:584.20px;top:614.90px;" width="10.6" height="10.6" viewBox="0 0 24 24" fill="none" stroke="#17a566" stroke-width="2" stroke-linecap="round" stroke-linejoin="round"><circle cx="12" cy="12" r="10"/><path d="M7.500 12.300l3 3 6-6.300"/></svg>
<div class="t" style="left:597.90px;top:616.00px;font-size:9.1px;line-height:9.1px;color:#1aa868;-webkit-text-stroke:0.15px #1aa868;">Mapped</div>
<div class="t" style="left:671.30px;top:615.93px;font-size:9.3px;line-height:9.3px;color:#111111;-webkit-text-stroke:0.35px #111111;">Opportunity</div>
<div class="abs" style="left:783.40px;top:608.10px;width:201.20px;height:24.60px;background:#fff;border:1px solid #dfe2e7;border-radius:5px;box-shadow:0 1px 2px rgba(16,24,40,.06);"></div>
<div class="t" style="left:792.10px;top:615.80px;font-size:10.4px;line-height:10.4px;color:#4b5563;">Contact ID</div>
<svg class="abs" style="left:968.70px;top:616.30px;" width="8" height="8" viewBox="0 0 24 24" fill="none" stroke="#a6adb8" stroke-width="2" stroke-linecap="round" stroke-linejoin="round"><path d="M5 9l7 7 7-7"/></svg>
<div class="t" style="left:1020.00px;top:615.68px;font-size:9px;line-height:9px;color:#6b7280;">-</div>
<div class="abs" style="left:157.00px;top:639.60px;width:1043.00px;height:47.40px;background:#fff;"></div>
<div class="abs" style="left:174.20px;top:650.40px;width:41.30px;height:25.40px;background:#fff;border:1px solid #dcdfe5;border-radius:5.5px;box-shadow:0 1px 2px rgba(16,24,40,.05);"></div>
<div class="t" style="left:184.00px;top:658.39px;font-size:9.7px;line-height:9.7px;color:#344054;-webkit-text-stroke:0.25px #344054;">Back</div>
<div class="abs" style="left:847.30px;top:657.10px;width:12.60px;height:12.60px;background:#fff;border:1px solid #dde0e6;border-radius:3px;"></div>
<div class="t" style="left:866.20px;top:658.13px;font-size:10.6px;line-height:10.6px;color:#4b5563;-webkit-text-stroke:0.1px #4b5563;">Don't import data in 8 unmapped columns</div>
<div class="t" style="left:1096.40px;top:658.03px;font-size:10px;line-height:10px;color:#151515;-webkit-text-stroke:0.28px #151515;letter-spacing:-0.12px;">Cancel</div>
<div class="abs" style="left:1138.20px;top:643.40px;width:50.70px;height:38.40px;background:#f2291e;"></div>
<div class="abs" style="left:1144.60px;top:649.80px;width:37.90px;height:25.60px;background:#fff;"></div>
<div class="abs" style="left:1144.60px;top:650.70px;width:37.30px;height:24.70px;background:#8ba3f7;border-radius:3px;"></div>
<div class="t" style="left:1153.20px;top:657.79px;font-size:9.7px;line-height:9.7px;color:#fff;-webkit-text-stroke:0.35px #fff;">Next</div>
<div class="abs" style="left:148.50px;top:658.60px;width:14.50px;height:14.50px;background:#36d39a;border-radius:50%;"></div>
<svg class="abs" style="left:151.40px;top:661.90px;" width="8" height="8" viewBox="0 0 24 24" fill="none" stroke="#17503f" stroke-width="3.2" stroke-linecap="round" stroke-linejoin="round"><path d="M15 5l-7 7 7 7"/></svg>
</div>
</body>
</html>
